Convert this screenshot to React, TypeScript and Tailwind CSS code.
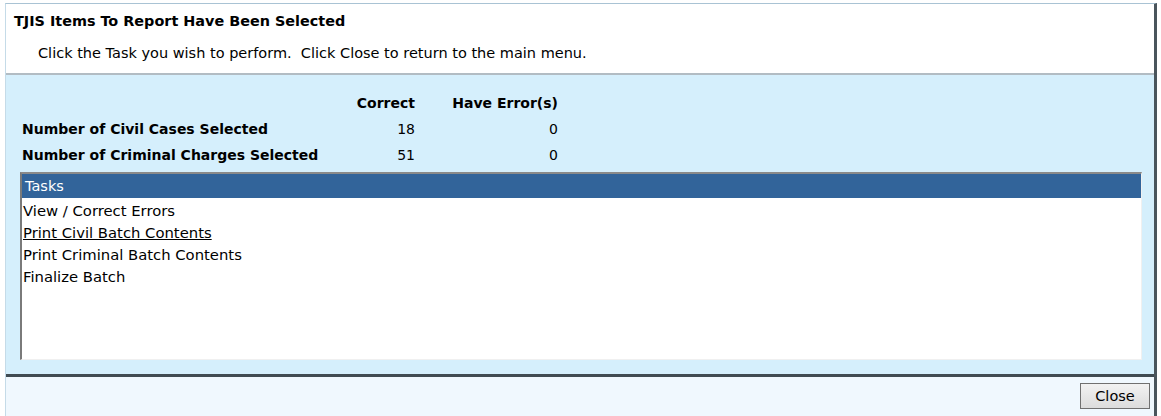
import React from "react";

export default function App() {
  const font = { fontFamily: "Tahoma, 'DejaVu Sans', sans-serif" };
  return (
    <div className="w-[1161px] h-[416px] bg-white pt-[3px] pl-[5px] pr-[4px]" style={font}>
      <div className="h-[413px] flex flex-col border-t border-l border-t-[#a9c3d4] border-l-[#c5dbe8] border-r-[3px] border-r-[#4a555c]">
        <div className="h-[71px] bg-white border-b-2 border-b-[#b2bcc3] pl-[8px] pt-[7px]">
          <div className="text-[14.4px] font-bold text-black leading-[20px]">TJIS Items To Report Have Been Selected</div>
          <div className="text-[14.5px] text-black leading-[18px] mt-[13px] pl-[24px]">Click the Task you wish to perform.&nbsp; Click Close to return to the main menu.</div>
        </div>
        <div className="h-[302px] bg-[#d5effc] border-b-[3px] border-b-[#404b52] pl-[16px] pr-[12px] pt-[15px]">
          <div className="grid grid-cols-[333px_60px_143px] text-[14px] font-bold leading-[26px] text-black">
            <div></div>
            <div className="text-right">Correct</div>
            <div className="text-right">Have Error(s)</div>
            <div>Number of Civil Cases Selected</div>
            <div className="text-right font-normal">18</div>
            <div className="text-right font-normal">0</div>
            <div>Number of Criminal Charges Selected</div>
            <div className="text-right font-normal">51</div>
            <div className="text-right font-normal">0</div>
          </div>
          <div className="mt-[4px] -ml-[2px] h-[188px] bg-white border-l-2 border-t-2 border-l-[#7a7a7a] border-t-[#8a8a8a] border-r border-b border-r-[#f0f0f0] border-b-[#f0f0f0]">
            <div className="h-[24px] bg-[#32649a] text-white text-[14.5px] leading-[24px] pl-[3px]">Tasks</div>
            <div className="text-[14.8px] leading-[22px] text-black pl-[1px] pt-[2px]">
              <div>View / Correct Errors</div>
              <div className="underline">Print Civil Batch Contents</div>
              <div>Print Criminal Batch Contents</div>
              <div>Finalize Batch</div>
            </div>
          </div>
        </div>
        <div className="flex-1 bg-[#f0f8fe] flex justify-end items-start pt-[6px] pr-[4px]">
          <button className="w-[70px] h-[26px] border border-[#707070] bg-gradient-to-b from-[#f2f2f2] to-[#dcdcdc] text-[14.5px] text-black leading-[24px]">Close</button>
        </div>
      </div>
    </div>
  );
}
